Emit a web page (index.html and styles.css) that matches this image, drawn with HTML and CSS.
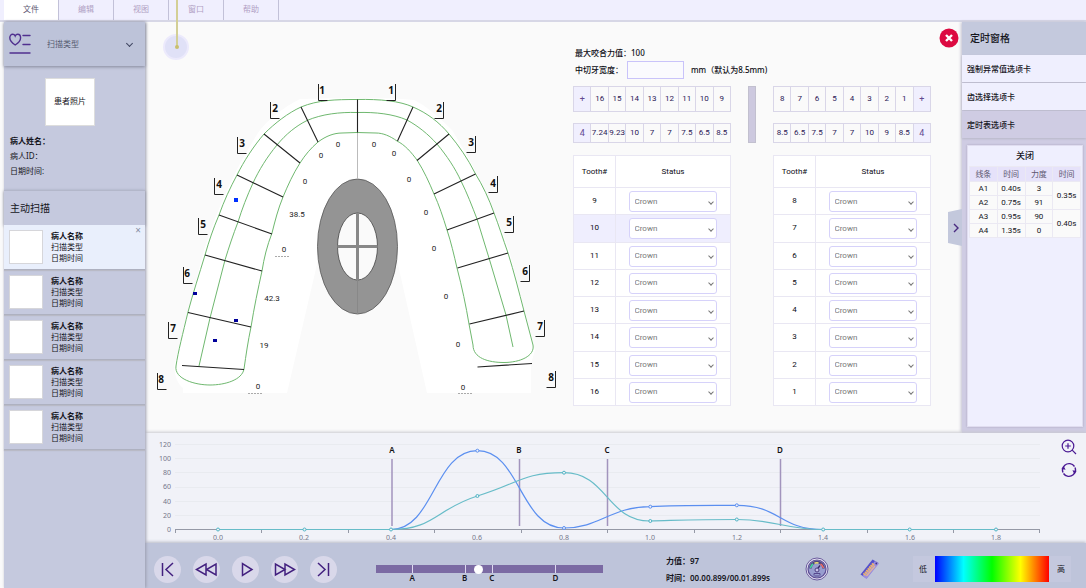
FILE: index.html
```html
<!DOCTYPE html>
<html lang="zh-CN">
<head>
<meta charset="utf-8">
<title>主动扫描</title>
<link rel="stylesheet" href="styles.css">
</head>
<body>
<nav class="tabs">
  <a class="tab active" href="#">文件</a>
  <a class="tab" href="#">编辑</a>
  <a class="tab" href="#">视图</a>
  <a class="tab" href="#">窗口</a>
  <a class="tab" href="#">帮助</a>
</nav>
<div class="app">
  <aside class="sidebar">
    <div class="scan-type">
      <svg class="heart" viewBox="0 0 22 22" width="22" height="22" fill="none" stroke="#50308f" stroke-width="1.4" stroke-linecap="round"><path d="M6.200 12C3 10 .8 7.500.8 4.800.8 2.600 2.200 1.200 3.700 1.200 4.800 1.200 5.700 1.900 6.200 3 6.700 1.900 7.600 1.200 8.700 1.200 10.200 1.200 11.600 2.600 11.600 4.800 11.600 7.500 9.500 10 6.200 12Z"/><path d="M14 2.500h7M14 11.500h7M1 20h20"/></svg>
      <div class="pick">
        <select aria-label="扫描类型"><option>扫描类型</option></select>
      </div>
    </div>
    <section class="patient">
      <div class="photo">患者照片</div>
      <p class="strong">病人姓名：</p>
      <p>病人ID：</p>
      <p>日期时间:</p>
    </section>
    <h2 class="side-title">主动扫描</h2>
    <ul class="scans">
      <li class="scan selected"><div class="thumb"></div><div><b>病人名称</b><span>扫描类型</span><span>日期时间</span></div><button class="dismiss" aria-label="移除">×</button></li>
      <li class="scan"><div class="thumb"></div><div><b>病人名称</b><span>扫描类型</span><span>日期时间</span></div></li>
      <li class="scan"><div class="thumb"></div><div><b>病人名称</b><span>扫描类型</span><span>日期时间</span></div></li>
      <li class="scan"><div class="thumb"></div><div><b>病人名称</b><span>扫描类型</span><span>日期时间</span></div></li>
      <li class="scan"><div class="thumb"></div><div><b>病人名称</b><span>扫描类型</span><span>日期时间</span></div></li>
    </ul>
  </aside>

  <main class="content">
    <div class="upper">
      <section class="workspace">
        <div class="lamp"><span></span></div>
        <svg class="arch" viewBox="150 74 415 326" width="415" height="326" fill="none">
          <path fill="#fff" d="M357 98C330 98 310 99 300 99C282 108 268 120 260 130C240 160 220 200 204 250L174 366C175 378 178 384 183 388V393H287L318 260H397L427 393H531V364L535 350L509 250C497 215 480 175 452 130C440 118 425 105 414 100C390 98 375 98 357 98Z"/>
          <ellipse cx="357.500" cy="246.500" rx="40" ry="67.500" fill="#949494" stroke="#555" stroke-width=".8"/>
          <ellipse cx="357.500" cy="246.500" rx="20" ry="33.500" fill="#fafafa" stroke="#444" stroke-width=".8"/>
          <path d="M357.500 213v67M337.500 246.500h40" stroke="#888" stroke-width="3"/>
          <path d="M357.500 132v47" stroke="#bbb"/>
          <path d="M357.500 280v34" stroke="#888"/>
          <g stroke="#6fb86f">
            <path d="M357 99.500C335 99.500 318 100 301 107C288 113 275 123 264 134C253 147 244 161 237 175C230 188 224 201 219 215C213 229 209 241 205 255C199 275 193 293 188 312C183 333 178 352 176 366C174 379 195 385 210 385C225 385 242 380 244 369C246 355 248 341 251 327C254 308 258 289 262 271C264 258 267 246 272 233C275 221 278 209 283 197C288 185 293 174 300 163C305 155 311 148 318 142C326 136 334 133 342 133L357 132.500"/>
            <path d="M357 112.500C340 112 322 114 307 120.500C296 126 286 134 277 145C267 157 259 170 253 183C247 196 242 209 238 222C233 235 229 247 225 260L210 318L199 366"/>
            <path d="M357 99.500C380 99 400 101 413 107C427 113 439 122 449 134C459 146 468 159 475 173C483 186 489 199 494 213C499 226 503 239 508 253C514 272 519 292 524 311L533 345C535 356 520 362.500 504 362.500C488 362.500 473 358 473 345L469 324C466 306 462 287 457 268C454 255 451 242 447 230C443 217 439 205 434 194C429 182 424 171 417 160C411 152 405 145 397 141C390 136 383 133 376 133L357 132.500"/>
            <path d="M357 112.500C376 112 393 114 407 120C418 126 428 134 437 144C447 156 455 168 461 181C467 193 472 206 477 219L489 258L506 315L513 347"/>
          </g>
          <path stroke="#222" stroke-width="1.100" d="M357.500 99.500V132.500M301 107L318 142M264 134L300 163M237 175L283 197M219 215L272 234M205 255L262 271M188 312.500L251 327M182 365.500L244 369.500M413 107L397.500 141M449 134L417 160.500M475.500 174L434 194M494 213L447 230M508 253L457.500 268M524 311L469.500 324M477.500 367L532 363.500"/>
          <path stroke="#222" d="M318.500 84v16.500h9M270.500 102v16.500h9M237.500 137v16.500h9M214.500 178v16.500h9M198.500 218v16.500h9M183.500 267v16.500h9M168.500 322v16.500h9M157.500 373v16.500h9M395.500 84v16.500h-9M443.500 102v16.500h-9M475.500 136v16.500h-9M497.500 176v16.500h-9M513.500 216v16.500h-9M529.500 265v16.500h-9M544.500 320v16.500h-9M555.500 371v16.500h-9"/>
          <path stroke="#aaa" stroke-dasharray="2 1" d="M275 256.500h14M248 393.500h15M458 393.500h15"/>
          <path fill="#0030ff" d="M234 198h4v4h-4z"/>
          <path fill="#00009a" d="M193 292h4v3h-4zM234 319h4v3h-4zM213 339h4v3h-4z"/>
          <g class="tooth-no">
            <text x="322" y="94">1</text><text x="275" y="112">2</text><text x="242" y="147">3</text><text x="219" y="188">4</text><text x="203" y="228">5</text><text x="187" y="277">6</text><text x="173" y="332">7</text><text x="161" y="383">8</text>
            <text x="391" y="94">1</text><text x="439" y="112">2</text><text x="471" y="146">3</text><text x="493" y="187">4</text><text x="509" y="226">5</text><text x="525" y="275">6</text><text x="540" y="330">7</text><text x="551" y="381">8</text>
          </g>
          <g class="force">
            <text x="338" y="147">0</text><text x="321" y="158">0</text><text x="305" y="184">0</text><text x="297" y="217">38.5</text><text x="284" y="252">0</text><text x="272" y="301">42.3</text><text x="264" y="348">19</text><text x="258" y="389">0</text>
            <text x="374" y="147">0</text><text x="394" y="156">0</text><text x="409" y="182">0</text><text x="426" y="215">0</text><text x="434" y="251">0</text><text x="446" y="299">0</text><text x="458" y="347">0</text><text x="463" y="390">0</text>
          </g>
        </svg>

        <div class="settings">
          <p class="max-force">最大咬合力值：100</p>
          <div class="width-row"><label for="incisor">中切牙宽度：</label><input id="incisor" type="text"><span>mm（默认为8.5mm)</span></div>
          <div class="strips">
            <div class="strip-pair">
              <table class="strip tall"><tr><td class="edge"><button>+</button></td><td>16</td><td>15</td><td>14</td><td>13</td><td>12</td><td>11</td><td>10</td><td>9</td></tr></table>
              <table class="strip"><tr><td class="edge">4</td><td>7.24</td><td>9.23</td><td>10</td><td>7</td><td>7</td><td>7.5</td><td>6.5</td><td>8.5</td></tr></table>
            </div>
            <div class="divider"></div>
            <div class="strip-pair">
              <table class="strip tall"><tr><td>8</td><td>7</td><td>6</td><td>5</td><td>4</td><td>3</td><td>2</td><td>1</td><td class="edge"><button>+</button></td></tr></table>
              <table class="strip"><tr><td>8.5</td><td>6.5</td><td>7.5</td><td>7</td><td>7</td><td>10</td><td>9</td><td>8.5</td><td class="edge">4</td></tr></table>
            </div>
          </div>
          <div class="tables">
            <table class="teeth">
              <thead><tr><th>Tooth#</th><th>Status</th></tr></thead>
              <tbody>
                <tr><td>9</td><td><div class="pick"><select aria-label="9"><option>Crown</option></select></div></td></tr>
                <tr class="current"><td>10</td><td><div class="pick"><select aria-label="10"><option>Crown</option></select></div></td></tr>
                <tr><td>11</td><td><div class="pick"><select aria-label="11"><option>Crown</option></select></div></td></tr>
                <tr><td>12</td><td><div class="pick"><select aria-label="12"><option>Crown</option></select></div></td></tr>
                <tr><td>13</td><td><div class="pick"><select aria-label="13"><option>Crown</option></select></div></td></tr>
                <tr><td>14</td><td><div class="pick"><select aria-label="14"><option>Crown</option></select></div></td></tr>
                <tr><td>15</td><td><div class="pick"><select aria-label="15"><option>Crown</option></select></div></td></tr>
                <tr><td>16</td><td><div class="pick"><select aria-label="16"><option>Crown</option></select></div></td></tr>
              </tbody>
            </table>
            <table class="teeth">
              <thead><tr><th>Tooth#</th><th>Status</th></tr></thead>
              <tbody>
                <tr><td>8</td><td><div class="pick"><select aria-label="8"><option>Crown</option></select></div></td></tr>
                <tr><td>7</td><td><div class="pick"><select aria-label="7"><option>Crown</option></select></div></td></tr>
                <tr><td>6</td><td><div class="pick"><select aria-label="6"><option>Crown</option></select></div></td></tr>
                <tr><td>5</td><td><div class="pick"><select aria-label="5"><option>Crown</option></select></div></td></tr>
                <tr><td>4</td><td><div class="pick"><select aria-label="4"><option>Crown</option></select></div></td></tr>
                <tr><td>3</td><td><div class="pick"><select aria-label="3"><option>Crown</option></select></div></td></tr>
                <tr><td>2</td><td><div class="pick"><select aria-label="2"><option>Crown</option></select></div></td></tr>
                <tr><td>1</td><td><div class="pick"><select aria-label="1"><option>Crown</option></select></div></td></tr>
              </tbody>
            </table>
          </div>
        </div>
        <button class="close" aria-label="关闭窗口"><svg viewBox="0 0 20 20" width="20" height="20"><circle cx="10" cy="10" r="9.500" fill="#dc0a41"/><path d="M7 7l6 6M13 7l-6 6" stroke="#fff" stroke-width="2.400"/></svg></button>
        <button class="collapse" aria-label="收起"><svg viewBox="0 0 6 10" width="6" height="10" fill="none" stroke="#4a2a80" stroke-width="1.400"><path d="M1 1l4 4-4 4"/></svg></button>
      </section>

      <aside class="timing">
        <h2>定时窗格</h2>
        <a href="#">强制异常值选项卡</a>
        <a href="#">齿选择选项卡</a>
        <a class="open" href="#">定时表选项卡</a>
        <div class="card">
          <button class="card-close">关闭</button>
          <table class="times">
            <thead><tr><th>线条</th><th>时间</th><th>力度</th><th>时间</th></tr></thead>
            <tbody>
              <tr><td>A1</td><td>0.40s</td><td>3</td><td rowspan="2">0.35s</td></tr>
              <tr><td>A2</td><td>0.75s</td><td>91</td></tr>
              <tr><td>A3</td><td>0.95s</td><td>90</td><td rowspan="2">0.40s</td></tr>
              <tr><td>A4</td><td>1.35s</td><td>0</td></tr>
            </tbody>
          </table>
        </div>
      </aside>
    </div>

    <section class="chart">
      <svg viewBox="145 433 900 110" fill="none">
        <path stroke="#e9ebf0" d="M175 444.500h865M175 458.500h865M175 472.500h865M175 487.500h865M175 501.500h865M175 515.500h865"/>
        <path stroke="#9599a6" d="M175 529.500H1040M175.500 529v4M261.500 529v4M348.500 529v4M434.500 529v4M521.500 529v4M607.500 529v4M694.500 529v4M780.500 529v4M867.500 529v4M953.500 529v4M1039.500 529v4"/>
        <path stroke="#a294bd" stroke-width="1.500" d="M392 459v67M519.500 459v67M607.500 459v67M780.500 459v67"/>
        <path stroke="#5b8ff0" stroke-width="1.200" d="M218 529.500H391C434 529.500 434 450.700 477.400 450.700C520 450.700 520 528 564 528C600 528 610 507 650 506.700C680 505 710 505.500 737 505.300C780 505.300 780 529.500 823 529.500H996"/>
        <path stroke="#67bcc8" stroke-width="1.200" d="M218 529.500H391C434 529.500 436 509 477.400 496C520 483 522 472.700 564 472.700C607 472.700 607 521 650 521C690 520 700 519.500 737 519.500C775 519.500 785 529.500 823 529.500H996"/>
        <g fill="#f1f2f8" stroke="#5b8ff0"><circle cx="477.400" cy="450.700" r="1.500"/><circle cx="564" cy="528" r="1.500"/><circle cx="650.300" cy="506.700" r="1.500"/><circle cx="736.800" cy="505.300" r="1.500"/></g>
        <g fill="#f1f2f8" stroke="#4fb4c4"><circle cx="218" cy="529.500" r="1.500"/><circle cx="304.500" cy="529.500" r="1.500"/><circle cx="391" cy="529.500" r="1.500"/><circle cx="477.400" cy="496" r="1.500"/><circle cx="564" cy="472.700" r="1.500"/><circle cx="650.300" cy="521" r="1.500"/><circle cx="736.800" cy="519.500" r="1.500"/><circle cx="823.200" cy="529.500" r="1.500"/><circle cx="909.700" cy="529.500" r="1.500"/><circle cx="996" cy="529.500" r="1.500"/></g>
        <g class="axis-y"><text x="171" y="447">120</text><text x="171" y="461">100</text><text x="171" y="475">80</text><text x="171" y="489">60</text><text x="171" y="504">40</text><text x="171" y="518">20</text><text x="171" y="532">0</text></g>
        <g class="axis-x"><text x="218" y="540">0.0</text><text x="304" y="540">0.2</text><text x="391" y="540">0.4</text><text x="477" y="540">0.6</text><text x="564" y="540">0.8</text><text x="650" y="540">1.0</text><text x="737" y="540">1.2</text><text x="823" y="540">1.4</text><text x="910" y="540">1.6</text><text x="996" y="540">1.8</text></g>
        <g class="marks"><text x="392" y="453">A</text><text x="519" y="453">B</text><text x="607" y="453">C</text><text x="780" y="453">D</text></g>
      </svg>
      <div class="chart-tools">
        <button aria-label="放大"><svg viewBox="0 0 16 16" width="16" height="16" fill="none" stroke="#4b1a94" stroke-width="1.200"><circle cx="7" cy="7" r="5.800"/><path d="M11.200 11.200L15 15M4.200 7h5.600M7 4.200v5.600"/></svg></button>
        <button aria-label="刷新"><svg viewBox="0 0 16 16" width="16" height="16" fill="none" stroke="#4b1a94" stroke-width="1.400"><path d="M2 10.500A6.500 6.500 0 0 1 3.800 3.200A6.500 6.500 0 0 1 13.500 4.500M14 5.500A6.500 6.500 0 0 1 12.200 12.800A6.500 6.500 0 0 1 2.500 11.500"/><path fill="#4b1a94" stroke="none" d="M.3 7L2.800 4.300 4.600 7.800ZM15.700 9L13.200 11.700 11.400 8.200Z"/></svg></button>
      </div>
    </section>

    <footer class="player">
      <div class="buttons">
        <button aria-label="开头"><svg viewBox="0 0 27 27"><path d="M8.500 7v13M19 7l-7 6.500 7 6.500"/></svg></button>
        <button aria-label="后退"><svg viewBox="0 0 27 27"><path d="M13 8v11L3.500 13.500ZM23 8v11L13.500 13.500Z"/></svg></button>
        <button aria-label="播放"><svg viewBox="0 0 27 27"><path d="M10.500 7.500v12L20 13.500Z"/></svg></button>
        <button aria-label="前进"><svg viewBox="0 0 27 27"><path d="M4.500 8v11L14 13.500ZM14 8v11L23.500 13.500Z"/></svg></button>
        <button aria-label="结尾"><svg viewBox="0 0 27 27"><path d="M18.500 7v13M8 7l7 6.500-7 6.500"/></svg></button>
      </div>
      <div class="timeline">
        <input type="range" min="0" max="100" value="45" aria-label="时间">
        <span class="mark" style="left:16%">A</span><span class="mark" style="left:39%">B</span><span class="mark" style="left:51%">C</span><span class="mark" style="left:79%">D</span>
      </div>
      <div class="readout"><span>力值：97</span><span>时间：00.00.899/00.01.899s</span></div>
      <button class="gauge" aria-label="仪表"><svg viewBox="0 0 24 24" width="24" height="24" fill="none"><circle cx="12" cy="12" r="11" fill="#e6e4f4" stroke="#6a5a9c"/><circle cx="12" cy="12" r="9" fill="#989dcf" stroke="#5d4d94" stroke-width="1.200"/><path d="M5.500 11.500A6.500 6.500 0 0 1 18.500 11.500" stroke="#4d4580" stroke-width="2.600"/><path d="M5.500 11A7 7 0 0 1 8 7" stroke="#44d4a0" stroke-width="1.600"/><path d="M9.500 6.200A7 7 0 0 1 13.500 6" stroke="#eee26c" stroke-width="1.600"/><path d="M15.500 6.800A7 7 0 0 1 18.500 11" stroke="#ef6c65" stroke-width="1.600"/><path d="M12 12.500l3-4" stroke="#352766" stroke-width="1.300"/><circle cx="12" cy="13" r="2" fill="#c8c4ea" stroke="#4a3c80"/><path d="M9 18.500v-2h6v2M9.500 19h5" stroke="#57488e"/></svg></button>
      <button class="ruler" aria-label="标尺"><svg viewBox="0 0 20 20" width="20" height="20" fill="none"><path fill="#5450cc" d="M.5 15.500L12.500.5l6 3.500L6.500 19.500Z"/><path fill="#9a8cdf" d="M2.500 17L15 2l4 2.500L6.500 20Z"/><path stroke="#efb56a" stroke-width="3" stroke-dasharray="1.600 .6" d="M4 16L13.500 4.800"/><path stroke="#e0b49c" stroke-width="1.200" d="M6.500 17L15 7"/><circle cx="16.300" cy="4.500" r=".9" fill="#3d3286"/></svg></button>
      <div class="legend"><span>低</span><div class="spectrum"></div><span>高</span></div>
    </footer>
  </main>
</div>
</body>
</html>
```
FILE: styles.css
```css
*, *::before, *::after { box-sizing: border-box; }
body {
  margin: 0;
  min-height: 100vh;
  display: flex;
  flex-direction: column;
  background: #fafafa;
  color: #15151c;
  font-family: "Noto Sans", "Noto Sans CJK SC", sans-serif;
  font-size: 8px;
  line-height: 12px;
}
h2, p, ul { margin: 0; padding: 0; }
ul { list-style: none; }
a { color: inherit; text-decoration: none; }
button { border: 0; padding: 0; background: none; color: inherit; font: inherit; cursor: pointer; }
svg { display: block; }
table { border-collapse: collapse; }

.tabs {
  display: flex;
  height: 22px;
  padding-left: 4px;
  background: #f0effe;
  border-bottom: 2px solid #d7d7e6;
}
.tab {
  width: 55px;
  border-right: 1px solid #c2c1d8;
  color: #b19fc4;
  line-height: 17px;
  text-align: center;
}
.tab.active { background: #fff; color: #5c5570; }

.app { flex: 1; display: flex; padding-left: 4px; }
.sidebar {
  width: 141px;
  flex: none;
  background: #c5c9de;
  box-shadow: 1px 0 3px #9a9cad;
  z-index: 1;
}
.scan-type {
  display: flex;
  align-items: center;
  gap: 16px;
  height: 44px;
  padding: 0 11px 0 5px;
  background: #bdc3d9;
  box-shadow: 0 1px 3px #85899b;
}
.heart { flex: none; }
.pick { position: relative; }
.pick::after {
  content: "";
  position: absolute;
  right: 4px;
  top: 50%;
  width: 4px;
  height: 4px;
  margin-top: -2px;
  border: solid #777;
  border-width: 0 1px 1px 0;
  transform: rotate(45deg);
  pointer-events: none;
}
.scan-type .pick { flex: 1; }
.scan-type .pick::after { right: 2px; width: 5px; height: 5px; margin-top: -3px; border-color: #3f4560; }
select {
  appearance: none;
  display: block;
  width: 100%;
  border: 0;
  padding: 0;
  background: none;
  color: #555b70;
  font: inherit;
}
.patient { height: 124px; padding: 12px 6px; }
.photo {
  width: 50px;
  height: 48px;
  margin: 0 auto 7px 35px;
  border: 1px solid #ddd;
  background: #fff;
  line-height: 44px;
  text-align: center;
}
.patient p { line-height: 15px; }
.strong { font-weight: 700; }
.side-title {
  height: 35px;
  padding-left: 6px;
  border-top: 1px solid #b3b7ca;
  font-size: 10px;
  font-weight: 400;
  line-height: 34px;
  box-shadow: 0 1px 3px #85899b;
}
.scan {
  position: relative;
  display: flex;
  gap: 8px;
  height: 45px;
  padding: 5px 5px 0;
  border-bottom: 1px solid #aeb1c0;
  box-shadow: 0 1px 1px #b9bac6;
}
.scan.selected { background: #e9effc; }
.thumb { width: 34px; height: 34px; border: 1px solid #d6d6da; background: #fff; }
.scan b, .scan span { display: block; line-height: 11px; }
.dismiss { position: absolute; right: 4px; top: 0; color: #888fa5; font-size: 10px; line-height: 10px; }

.content { flex: 1; min-width: 0; display: flex; flex-direction: column; }
.upper { flex: 1; display: flex; }
.workspace {
  position: relative;
  flex: 1;
  display: flex;
  justify-content: space-between;
  align-items: flex-start;
  padding: 0 31px 0 5px;
}
.lamp {
  position: absolute;
  left: 18px;
  top: 12px;
  width: 26px;
  height: 26px;
  border: 2px solid #eceafc;
  border-radius: 50%;
  background: #e0e1f7;
}
.lamp::before {
  content: "";
  position: absolute;
  left: 11px;
  bottom: 11px;
  width: 2px;
  height: 47px;
  background: #d3cf96;
}
.lamp span { position: absolute; left: 10px; top: 9px; width: 4px; height: 4px; border-radius: 50%; background: #c9bf6e; }
.arch { flex: none; margin-top: 52px; }
.tooth-no { fill: #111; font-size: 10px; font-weight: 700; text-anchor: middle; }
.force { fill: #222; font-family: Roboto, sans-serif; font-size: 8px; text-anchor: middle; }

.settings { width: 358px; padding-top: 24px; color: #0c0c14; font-weight: 500; }
.max-force, .width-row { padding-left: 2px; line-height: 14px; }
.width-row { display: flex; align-items: center; height: 20px; }
.width-row label { width: 52px; }
.width-row input { width: 57px; height: 18px; border: 1px solid #c9c3fa; background: #fafafe; font: inherit; }
.width-row span { margin-left: 7px; }
.strips { display: flex; align-items: stretch; justify-content: space-between; margin-top: 6px; }
.strip-pair { width: 158px; display: flex; flex-direction: column; gap: 11px; }
.divider { width: 8px; border: 1px solid #c2c0cf; background: #cdc9df; }
.strip { width: 100%; table-layout: fixed; color: #2b1856; font-family: Roboto, sans-serif; font-weight: 400; }
.strip td { height: 19px; padding: 0; border: 1px solid #d9d6e8; text-align: center; white-space: nowrap; }
.strip.tall td { height: 25px; }
.strip .edge { background: #f0effe; color: #634a90; font-size: 9px; }
.tables { display: flex; justify-content: space-between; margin-top: 12px; }
.teeth {
  width: 158px;
  height: 251px;
  border: 1px solid #e6e4f0;
  background: #fff;
  font-family: Roboto, sans-serif;
  font-weight: 400;
}
.teeth th { height: 32px; font-weight: 400; }
.teeth th, .teeth td { padding: 0; border: 1px solid #e9e7f3; text-align: center; }
.teeth th:first-child { width: 42px; }
.teeth .pick { width: 88px; margin: 0 auto; }
.teeth tbody td:last-child { padding: 1px 1px 0 0; }
.teeth select { height: 21px; padding: 0 5px; border: 1px solid #d6d2fa; border-radius: 3px; background: #fff; color: #777; }
.teeth .current td { background: #efeefe; }
.close { position: absolute; right: 3px; top: 6px; }
.collapse {
  position: absolute;
  right: 0;
  top: 187px;
  width: 14px;
  height: 37px;
  padding-left: 5px;
  background: #c3c8dc;
  clip-path: polygon(0 8%, 100% 0, 100% 100%, 0 92%);
}

.timing {
  width: 124px;
  flex: none;
  display: flex;
  flex-direction: column;
  padding-bottom: 6px;
  background: #cfcce3;
  box-shadow: -1px 0 3px #c0bfcf;
}
.timing h2 { height: 33px; padding-left: 8px; background: #c4c9dd; font-size: 10px; font-weight: 500; line-height: 32px; }
.timing a { height: 27px; margin-bottom: 1px; padding-left: 5px; background: #efeffe; font-weight: 500; line-height: 27px; box-shadow: 0 1px 2px #b8b8c8; }
.timing a.open { background: #cfcce3; }
.card { flex: 1; margin: 6px 3px 0 5px; padding: 4px 1px; border: 1px solid #e0ddf0; background: #efeffe; text-align: center; box-shadow: 0 0 2px #aaa6be; }
.card-close { font-size: 9px; font-weight: 500; line-height: 12px; }
.times { width: 100%; margin-top: 4px; table-layout: fixed; background: #fafafa; }
.times th { height: 15px; background: #e6e2fa; color: #5c5770; font-weight: 400; }
.times td { height: 14px; }
.times th, .times td { padding: 0; border: 1px solid #ebe9f3; }
.times tbody { font-family: Roboto, sans-serif; }

.chart { display: flex; background: #f1f2f8; box-shadow: 0 -1px 3px #c8c8cf; position: relative; }
.chart > svg { flex: 1; min-width: 0; }
.axis-y { fill: #74778a; font-size: 7px; text-anchor: end; }
.axis-x { fill: #74778a; font-size: 7px; text-anchor: middle; }
.marks { fill: #111; font-size: 8px; font-weight: 600; text-anchor: middle; }
.chart-tools { display: flex; flex-direction: column; gap: 7px; width: 41px; padding: 6px 0 0 16px; }

.player {
  position: relative;
  display: flex;
  align-items: center;
  height: 45px;
  padding: 7px 15px 0 8px;
  background: #bec4da;
  box-shadow: 0 -1px 3px #b6b8c6;
}
.buttons { display: flex; gap: 12px; padding-left: 1px; }
.buttons button { width: 27px; height: 27px; border-radius: 50%; background: #d9d8ea; }
.buttons svg { fill: none; stroke: #43207f; stroke-width: 1.500; }
.timeline { position: relative; flex: 0 1 227px; height: 8px; margin-left: 39px; background: #7b6aa3; }
.timeline input {
  appearance: none;
  position: relative;
  z-index: 1;
  display: block;
  width: 100%;
  height: 8px;
  margin: 0;
  background: none;
}
.timeline input::-webkit-slider-thumb { appearance: none; width: 9px; height: 9px; border-radius: 50%; background: #fff; }
.mark {
  position: absolute;
  top: 0;
  width: 10px;
  margin-left: -5px;
  padding-top: 7px;
  font-weight: 600;
  line-height: 12px;
  text-align: center;
}
.mark::before { content: ""; position: absolute; left: 5px; top: 0; width: 1px; height: 8px; background: #ded9ef; }
.readout { display: flex; flex-direction: column; gap: 5px; width: 139px; margin-left: 63px; font-weight: 600; }
.ruler { margin-left: 31px; }
.legend { display: flex; flex: 1; align-items: center; gap: 8px; height: 26px; margin-left: 33px; padding: 0 6px; background: #c4c8de; }
.legend .spectrum { flex: 1; height: 26px; background: linear-gradient(90deg, #00f, #0ff 25%, #0f0 50%, #ff0 75%, #f00); }
```
